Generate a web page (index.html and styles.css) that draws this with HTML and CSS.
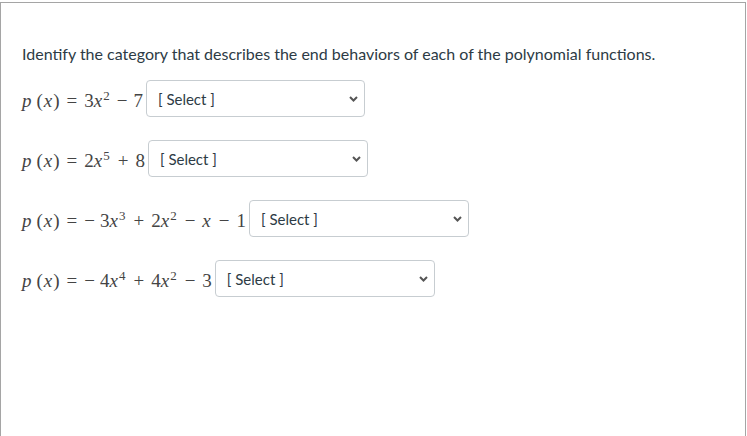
FILE: index.html
```html
<!DOCTYPE html>
<html lang="en">
<head>
    <meta charset="UTF-8">
    <title>Quiz question</title>
    <link rel="stylesheet" href="styles.css">
</head>
<body>

    <!-- Question box -->
    <div class="question">
        <div class="question-text">
            <p class="prompt">Identify the category that describes the end behaviors of each of the polynomial functions.</p>

            <!-- Row 1 -->
            <p class="row">
                <span class="math"><i>p</i><span class="fn">(<i class="x">x</i>)</span><span class="rel">=</span>3<i>x</i><sup>2</sup><span class="bin first">−</span>7</span>
                <span class="select-wrap">
                    <select class="answer w1"><option>[ Select ]</option></select>
                    <svg class="chevron" width="9" height="6" viewBox="0 0 9 6"><path d="M1 1 L4.5 4.5 L8 1" fill="none" stroke="#555" stroke-width="2"/></svg>
                </span>
            </p>

            <!-- Row 2 -->
            <p class="row">
                <span class="math"><i>p</i><span class="fn">(<i class="x">x</i>)</span><span class="rel">=</span>2<i>x</i><sup>5</sup><span class="bin">+</span>8</span>
                <span class="select-wrap">
                    <select class="answer"><option>[ Select ]</option></select>
                    <svg class="chevron" width="9" height="6" viewBox="0 0 9 6"><path d="M1 1 L4.5 4.5 L8 1" fill="none" stroke="#555" stroke-width="2"/></svg>
                </span>
            </p>

            <!-- Row 3 -->
            <p class="row">
                <span class="math"><i>p</i><span class="fn">(<i class="x">x</i>)</span><span class="rel">=</span><span class="neg">−</span>3<i>x</i><sup>3</sup><span class="bin">+</span>2<i>x</i><sup>2</sup><span class="bin">−</span><i>x</i><span class="bin">−</span>1</span>
                <span class="select-wrap">
                    <select class="answer"><option>[ Select ]</option></select>
                    <svg class="chevron" width="9" height="6" viewBox="0 0 9 6"><path d="M1 1 L4.5 4.5 L8 1" fill="none" stroke="#555" stroke-width="2"/></svg>
                </span>
            </p>

            <!-- Row 4 -->
            <p class="row">
                <span class="math"><i>p</i><span class="fn">(<i class="x">x</i>)</span><span class="rel">=</span><span class="neg">−</span>4<i>x</i><sup>4</sup><span class="bin">+</span>4<i>x</i><sup>2</sup><span class="bin">−</span>3</span>
                <span class="select-wrap">
                    <select class="answer"><option>[ Select ]</option></select>
                    <svg class="chevron" width="9" height="6" viewBox="0 0 9 6"><path d="M1 1 L4.5 4.5 L8 1" fill="none" stroke="#555" stroke-width="2"/></svg>
                </span>
            </p>
        </div>
    </div>

</body>
</html>
```

FILE: styles.css
```css
/* Page */
body {
    margin: 0;
    background: #ffffff;
    font-family: Lato, "Open Sans", sans-serif;
    color: #2d3b45;
}

/* Question box */
.question {
    margin-top: 2px;
    width: 744px;
    min-height: 460px;
    border: 1px solid #a5a5a5;
    border-bottom: none;
}

.question-text {
    padding: 39px 21px 0 21px;
}

.prompt {
    margin: 0 0 14px 0;
    font-size: 16px;
    line-height: 24px;
}

/* Each formula + dropdown */
.row {
    display: flex;
    align-items: center;
    gap: 3px;
    margin: 0 0 23px 0;
}

.math {
    font-family: "Liberation Serif", "DejaVu Serif", serif;
    font-size: 19px;
    line-height: 24px;
    padding-top: 4px;
    color: #444444;
    white-space: nowrap;
}

.math i {
    font-style: italic;
}

.math sup {
    font-size: 13px;
    vertical-align: 7px;
    line-height: 0;
    margin-left: 1px;
}

.fn {
    margin-left: 5px;
}

.x {
    margin: 0 1px;
}

.rel {
    margin: 0 7px;
}

.bin {
    margin: 0 7px 0 8px;
}

.bin.first {
    margin: 0 6px 0 7px;
}

.neg {
    margin-right: 5px;
}

/* Dropdown */
.select-wrap {
    position: relative;
    display: inline-block;
}

.answer {
    appearance: none;
    -webkit-appearance: none;
    width: 220px;
    height: 37px;
    padding: 0 30px 0 11px;
    border: 1px solid #c7cdd1;
    border-radius: 4px;
    background: #ffffff;
    font-family: Lato, "Open Sans", sans-serif;
    font-size: 15px;
    color: #2d3b45;
    display: block;
}

.answer.w1 {
    width: 219px;
}

.chevron {
    position: absolute;
    right: 7px;
    top: 16px;
    pointer-events: none;
}
```
